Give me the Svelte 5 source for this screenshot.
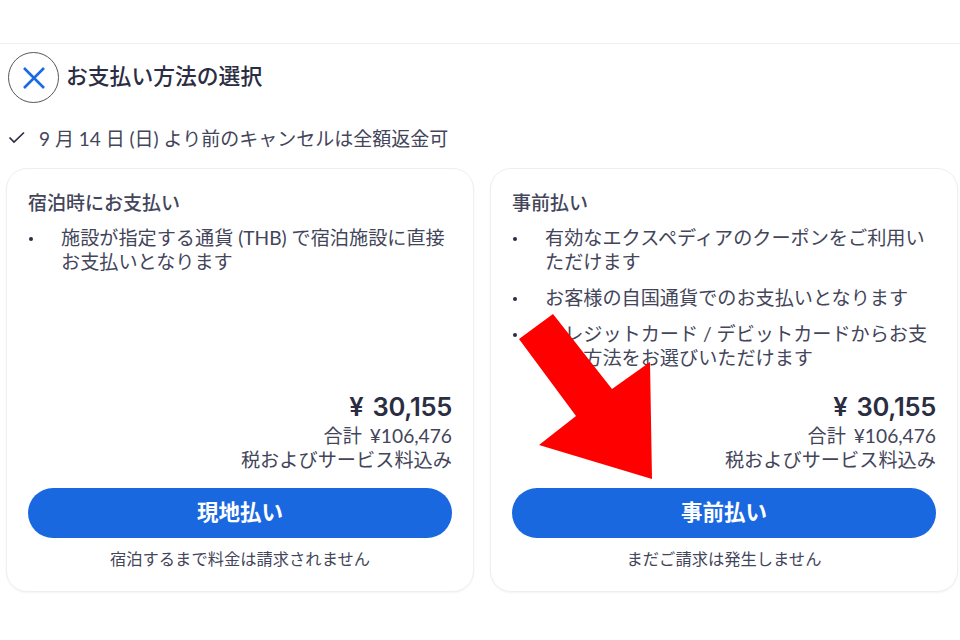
<script lang="ts">
  interface PayOption {
    title: string;
    points: string[];
    action: string;
    note: string;
  }

  const options: PayOption[] = [
    {
      title: '宿泊時にお支払い',
      points: ['施設が指定する通貨 (THB) で宿泊施設に直接お支払いとなります'],
      action: '現地払い',
      note: '宿泊するまで料金は請求されません'
    },
    {
      title: '事前払い',
      points: [
        '有効なエクスペディアのクーポンをご利用いただけます',
        'お客様の自国通貨でのお支払いとなります',
        'クレジットカード / デビットカードからお支払い方法をお選びいただけます'
      ],
      action: '事前払い',
      note: 'まだご請求は発生しません'
    }
  ];
</script>

<div class="page">
  <header class="topbar">
    <button class="close" aria-label="閉じる">
      <svg width="24" height="24" viewBox="0 0 24 24">
        <path d="M2 2 L22 22 M22 2 L2 22" fill="none" stroke="#1a6be0" stroke-width="2.6" />
      </svg>
    </button>
    <h1>お支払い方法の選択</h1>
  </header>

  <div class="refund">
    <svg width="18" height="14" viewBox="0 0 18 14">
      <path d="M1.5 7.5 L6 12 L16 2.5" fill="none" stroke="#2b2d42" stroke-width="1.7" />
    </svg>
    <span>9 月 14 日 (日) より前のキャンセルは全額返金可</span>
  </div>

  <div class="cards">
    {#each options as opt}
      <section class="card">
        <h2>{opt.title}</h2>
        <ul>
          {#each opt.points as point}
            <li>{point}</li>
          {/each}
        </ul>
        <div class="price">
          <strong>¥ 30,155</strong>
          <span>合計 ¥106,476</span>
          <span>税およびサービス料込み</span>
        </div>
        <button class="pay">{opt.action}</button>
        <p class="note">{opt.note}</p>
      </section>
    {/each}
  </div>

  <svg class="arrow" width="960" height="640" viewBox="0 0 960 640" aria-hidden="true">
    <polygon points="553,314 519,339 576,416 539,445 652,479 650,362 612,389" fill="#ff0000" />
  </svg>
</div>

<style>
  :global(body) {
    margin: 0;
    background: #fff;
  }

  .page {
    position: relative;
    width: 960px;
    height: 640px;
    overflow: hidden;
    box-sizing: border-box;
    padding-top: 43px;
    font-family: Lato, "Noto Sans CJK JP", sans-serif;
    color: #43455a;
  }

  .topbar {
    display: flex;
    align-items: center;
    gap: 7px;
    height: 67px;
    padding-left: 8px;
    border-top: 1px solid #f0f0f2;
  }

  .close {
    display: flex;
    align-items: center;
    justify-content: center;
    width: 51px;
    height: 51px;
    padding: 0;
    background: #fff;
    border: 1px solid #55565f;
    border-radius: 50%;
  }

  h1 {
    margin: 0;
    padding-bottom: 3px;
    font-size: 21.8px;
    font-weight: 500;
    line-height: 28px;
    color: #2b2d42;
  }

  .refund {
    display: flex;
    align-items: center;
    gap: 13px;
    height: 28px;
    margin-top: 12px;
    padding-left: 8px;
    font-size: 19px;
  }

  .cards {
    display: grid;
    grid-template-columns: 468px 468px;
    gap: 16px;
    margin-top: 17px;
    padding-left: 6px;
  }

  .card {
    display: flex;
    flex-direction: column;
    box-sizing: border-box;
    height: 424px;
    padding: 20px 21px 20px;
    background: #fff;
    border: 1px solid #efeff2;
    border-radius: 21px;
    box-shadow: 0 1px 2px rgba(40, 40, 70, 0.05);
  }

  h2 {
    margin: 0;
    font-size: 19px;
    font-weight: 500;
    line-height: 28px;
    color: #43455a;
  }

  ul {
    margin: 9px 0 0;
    padding: 0;
    list-style: none;
    flex: 1;
  }

  li {
    position: relative;
    margin-bottom: 12px;
    padding-left: 33px;
    font-size: 19.15px;
    line-height: 24px;
  }

  li::before {
    content: "";
    position: absolute;
    left: 1px;
    top: 11px;
    width: 4px;
    height: 4px;
    border-radius: 50%;
    background: #2b2d42;
  }

  .price {
    display: flex;
    flex-direction: column;
    align-items: flex-end;
    font-size: 19.2px;
    line-height: 24px;
    word-spacing: 3px;
  }

  .price strong {
    font-family: Inter, "Noto Sans CJK JP", sans-serif;
    font-size: 25.6px;
    font-weight: 600;
    letter-spacing: -0.3px;
    line-height: 32px;
    margin-bottom: 1px;
    color: #2b2d42;
  }

  .pay {
    height: 50px;
    margin-top: 16px;
    padding: 0 0 5px;
    border: none;
    border-radius: 25px;
    background: #1a68e0;
    color: #fff;
    font-family: inherit;
    font-size: 21.5px;
    font-weight: 700;
  }

  .note {
    margin: 9px 0 0;
    text-align: center;
    font-size: 16.3px;
    line-height: 24px;
  }

  .arrow {
    position: absolute;
    left: 0;
    top: 0;
    pointer-events: none;
  }
</style>
